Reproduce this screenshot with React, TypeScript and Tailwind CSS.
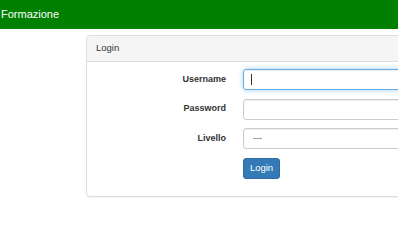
export default function App() {
  return (
    <div className="w-[398px] h-[248px] overflow-hidden bg-white text-[12px] text-[#333] font-['Liberation_Sans',Arial,sans-serif]">
      <nav className="h-[29px] bg-[#008000] flex items-center px-[1px]">
        <span className="text-white text-[11px]">Formazione</span>
      </nav>

      <div className="ml-[86px] mt-[6px] w-[340px] border border-[#ddd] rounded-[4px] shadow-[0_1px_1px_rgba(0,0,0,0.05)]">
        <div className="h-[26px] bg-[#f5f5f5] border-b border-[#ddd] rounded-t-[4px] flex items-center px-[9px] text-[9.5px]">
          Login
        </div>
        <div className="pt-[7px] pb-[17px] flex flex-col gap-[8.5px]">
          <div className="flex items-center">
            <label className="w-[139px] text-right font-bold text-[9px]">Username</label>
            <div className="ml-[17px] flex-1 h-[21px] border border-[#66afe9] rounded-[3px] shadow-[inset_0_1px_1px_rgba(0,0,0,0.075),0_0_5px_rgba(102,175,233,0.6)] flex items-center px-[7px]">
              <span className="w-px h-[11px] bg-[#333]" />
            </div>
          </div>
          <div className="flex items-center">
            <label className="w-[139px] text-right font-bold text-[9px]">Password</label>
            <div className="ml-[17px] flex-1 h-[21px] border border-[#ccc] rounded-[3px] shadow-[inset_0_1px_1px_rgba(0,0,0,0.075)]" />
          </div>
          <div className="flex items-center">
            <label className="w-[139px] text-right font-bold text-[9px]">Livello</label>
            <div className="ml-[17px] flex-1 h-[21px] border border-[#ccc] rounded-[3px] shadow-[inset_0_1px_1px_rgba(0,0,0,0.075)] flex items-center px-[9px] text-[9px] text-[#555]">
              ---
            </div>
          </div>
          <div className="flex">
            <button className="ml-[156px] w-[37px] h-[21px] bg-[#337ab7] border border-[#2e6da4] rounded-[3px] text-white text-[9.5px]">
              Login
            </button>
          </div>
        </div>
      </div>
    </div>
  );
}
